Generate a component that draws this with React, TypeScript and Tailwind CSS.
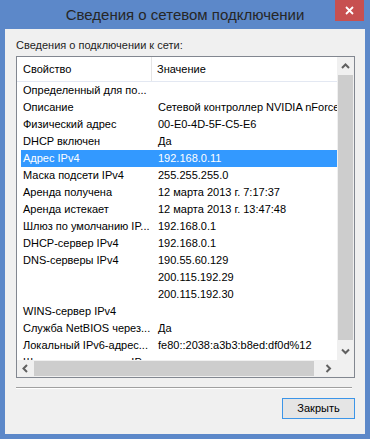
type Row = { name: string; value: string; selected?: boolean };

const rows: Row[] = [
  { name: "Определенный для по...", value: "" },
  { name: "Описание", value: "Сетевой контроллер NVIDIA nForce" },
  { name: "Физический адрес", value: "00-E0-4D-5F-C5-E6" },
  { name: "DHCP включен", value: "Да" },
  { name: "Адрес IPv4", value: "192.168.0.11", selected: true },
  { name: "Маска подсети IPv4", value: "255.255.255.0" },
  { name: "Аренда получена", value: "12 марта 2013 г. 7:17:37" },
  { name: "Аренда истекает", value: "12 марта 2013 г. 13:47:48" },
  { name: "Шлюз по умолчанию IP...", value: "192.168.0.1" },
  { name: "DHCP-сервер IPv4", value: "192.168.0.1" },
  { name: "DNS-серверы IPv4", value: "190.55.60.129" },
  { name: "", value: "200.115.192.29" },
  { name: "", value: "200.115.192.30" },
  { name: "WINS-сервер IPv4", value: "" },
  { name: "Служба NetBIOS через...", value: "Да" },
  { name: "Локальный IPv6-адрес...", value: "fe80::2038:a3b3:b8ed:df0d%12" },
  { name: "Шлюз по умолчанию IP...", value: "" },
];

function Chevron({ dir }: { dir: "up" | "down" | "left" | "right" }) {
  const pts = {
    up: "1,5 4.5,1.5 8,5",
    down: "1,1.5 4.5,5 8,1.5",
    left: "5,1 1.5,4.5 5,8",
    right: "1.5,1 5,4.5 1.5,8",
  }[dir];
  const vertical = dir === "up" || dir === "down";
  return (
    <svg
      width={vertical ? 9 : 7}
      height={vertical ? 7 : 9}
      viewBox={vertical ? "0 0 9 7" : "0 0 7 9"}
    >
      <polyline points={pts} fill="none" stroke="#606060" strokeWidth="2" />
    </svg>
  );
}

export default function App() {
  return (
    <div className="flex h-[439px] w-[370px] flex-col bg-[#5c88c9] font-['Liberation_Sans',Arial,sans-serif] text-[11px] text-black">
      <div className="grid h-[29px] grid-cols-[35px_1fr_35px]">
        <div />
        <div className="pt-[5px] text-center text-[15px] leading-[20px] text-[#262626]">
          Сведения о сетевом подключении
        </div>
        <div className="flex justify-start">
          <div className="flex h-[21px] w-[29px] items-center justify-center bg-[#c75050]">
            <svg width="9" height="9" viewBox="0 0 9 9">
              <path d="M1 1L8 8M8 1L1 8" stroke="white" strokeWidth="1.8" />
            </svg>
          </div>
        </div>
      </div>

      <div className="mx-[5px] mb-[5px] flex flex-1 flex-col bg-[#f0f0f0] pl-[11px] pr-[10px] pt-[10px]">
        <div className="h-[13px] leading-[13px] text-[#1e1e1e]">
          Сведения о подключении к сети:
        </div>

        <div className="mt-[4px] grid h-[322px] w-[339px] grid-cols-[1fr_17px] grid-rows-[1fr_17px] border border-[#828790] bg-white">
          <div className="overflow-hidden">
            <div className="flex h-[25px] border-b border-[#e3e8f2] leading-[24px]">
              <div className="w-[135px] shrink-0 border-r border-[#e5e5e5] pl-[6px]">Свойство</div>
              <div className="pl-[5px]">Значение</div>
            </div>
            {rows.map((r, i) => (
              <div
                key={i}
                className={
                  r.selected
                    ? "ml-[4px] flex h-[17px] w-[400px] bg-[#3399ff] leading-[17px] text-white"
                    : "ml-[4px] flex h-[17px] w-[400px] leading-[17px]"
                }
              >
                <div className="w-[131px] shrink-0 whitespace-nowrap pl-[2px]">{r.name}</div>
                <div className="whitespace-nowrap pl-[6px]">{r.value}</div>
              </div>
            ))}
          </div>

          <div className="flex flex-col bg-[#f0f0f0]">
            <div className="flex h-[18px] items-center justify-center">
              <Chevron dir="up" />
            </div>
            <div className="flex-1 px-px pb-[3px]">
              <div className="h-full bg-[#cdcdcd]" />
            </div>
            <div className="flex h-[17px] items-center justify-center">
              <Chevron dir="down" />
            </div>
          </div>

          <div className="flex bg-[#f0f0f0]">
            <div className="flex w-[17px] items-center justify-center">
              <Chevron dir="left" />
            </div>
            <div className="flex-1 py-px pr-[6px]">
              <div className="h-full bg-[#cdcdcd]" />
            </div>
            <div className="flex w-[17px] items-center justify-center">
              <Chevron dir="right" />
            </div>
          </div>
          <div className="bg-[#f0f0f0]" />
        </div>

        <div className="mr-[3px] mt-[9px] border-t border-[#a0a0a0] border-b border-b-white" />

        <div className="mt-[9px] flex justify-end">
          <button className="h-[21px] w-[73px] border border-[#3c95e8] bg-[#e5e5e5] text-[11px] leading-[19px] text-black">
            Закрыть
          </button>
        </div>
      </div>
    </div>
  );
}
